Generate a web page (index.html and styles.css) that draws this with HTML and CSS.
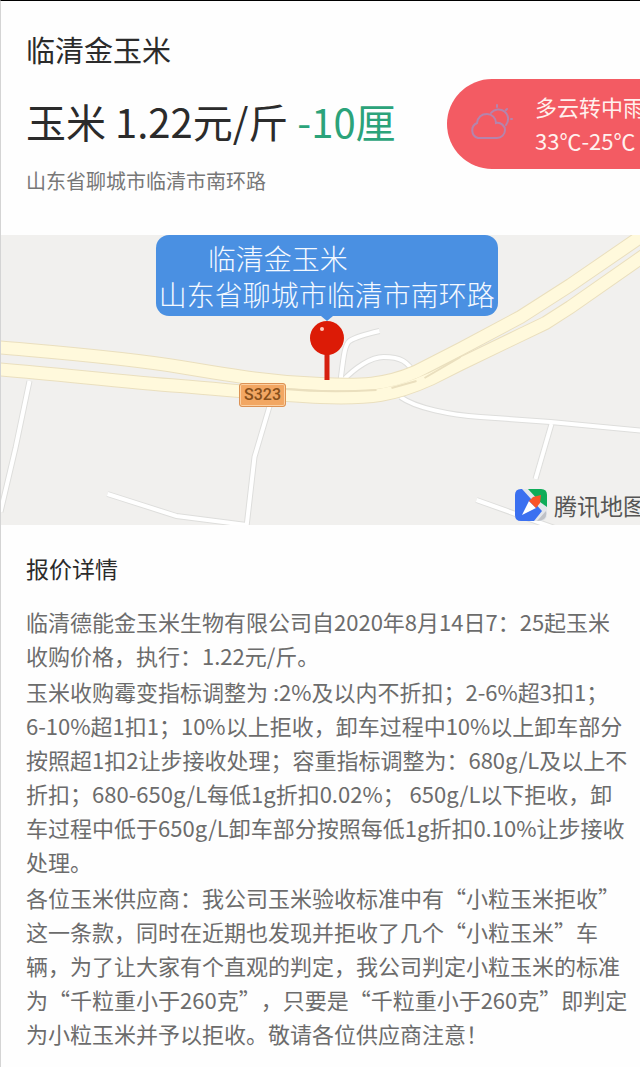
FILE: index.html
```html
<!DOCTYPE html>
<html lang="zh-CN">
  <head>
    <meta charset="UTF-8" />
    <meta name="viewport" content="width=device-width, initial-scale=1.0" />
    <title>临清金玉米</title>
    <link rel="stylesheet" href="styles.css">
  </head>

  <body>
    <header class="summary">
      <h1>临清金玉米</h1>
      <div class="price-row">
        <p class="price">玉米 1.22元/斤 <span class="change">-10厘</span></p>
        <div class="weather">
          <svg class="weather-icon" viewBox="0 0 46 38" width="46" height="38">
            <path d="M9 34 A8 8 0 0 1 8 19 C9 13 13 10 18 10 C23 10 27 14 27 19 C32 18 36 22 36 26 A8 8 0 0 1 28 34 Z" />
            <path d="M22 9 A9 9 0 1 1 37 21 M28 1 V3 M38 5 L37 6 M42 15 H43" />
          </svg>
          <div class="weather-text">
            <span>多云转中雨</span>
            <span>33℃-25℃</span>
          </div>
        </div>
      </div>
      <p class="address">山东省聊城市临清市南环路</p>
    </header>

    <section class="map">
      <svg class="roads" viewBox="0 0 640 290" preserveAspectRatio="xMidYMid slice">
        <defs>
          <path id="upper" d="M-5 112 C50 117 120 122 180 132 C240 142 270 147 320 149 C360 151 385 150 415 137 L460 114 L520 82 L570 50 L650 -5" />
          <path id="lower" d="M-5 134 C60 139 120 147 180 151 C230 155 270 160 320 162 C370 164 395 160 430 144 L460 129 L520 100 L545 88 L570 72 L650 16" />
          <g id="lanes">
            <path d="M29 146 L15 213 L0 277" />
            <path d="M270 168 L254 222 L246 292" />
            <path d="M107 259 L176 281 L246 290" />
            <path d="M340 146 C343 122 344 110 349 106 C355 102 366 99 379 96" />
            <path d="M341 147 C355 132 371 122 383 122 C400 122 407 126 415 140" />
            <path d="M400 162 C415 173 450 180 480 182 L550 187 L645 196" />
            <path d="M551 189 L535 244" />
            <path d="M476 265 L557 294" />
          </g>
        </defs>
        <use href="#lanes" class="lane-edge" />
        <use href="#lanes" class="lane" />
        <use href="#upper" class="main-edge" />
        <use href="#lower" class="main-edge" />
        <use href="#upper" class="main-road" />
        <use href="#lower" class="main-road" />
        <path class="divider" d="M284 154 C315 157 345 157 376 155 M391 153 L416 146 M424 143 L460 122" />
      </svg>

      <span class="sign">S323</span>

      <div class="marker">
        <div class="callout">
          <span class="callout-name">临清金玉米</span>
          <span>山东省聊城市临清市南环路</span>
        </div>
        <svg class="pin" viewBox="0 0 36 64" width="36" height="64">
          <path fill="#4a90e2" d="M12 0 H24 L18 5 Z" />
          <path stroke="#d5200f" stroke-width="5" d="M18 36 V64" />
          <circle cx="18" cy="22" r="17" fill="#dc1b06" />
          <circle cx="13" cy="13" r="2" fill="#ffc9bd" />
        </svg>
      </div>

      <div class="map-brand">
        <svg viewBox="0 0 32 32" width="32" height="32">
          <rect width="32" height="32" rx="6" fill="#e3e6eb" />
          <path fill="#3b70f0" d="M6 0 H7 L27 22 L19 32 H6 Q0 32 0 26 V6 Q0 0 6 0 Z" />
          <path fill="#10ac59" d="M13 0 H26 Q32 0 32 6 V18 L25 13 Z" />
          <path fill="#bfc2c7" d="M31 22 Q33 32 22 32 Z" />
          <path fill="#fff" d="M7 26 L14 12 L21 19 Z" />
          <path fill="#fa5429" d="M14 12 L18 8 L26 6 L25 14 L21 19 Z" />
        </svg>
        <span>腾讯地图</span>
      </div>
    </section>

    <main class="detail">
      <h2>报价详情</h2>
      <p>临清德能金玉米生物有限公司自2020年8月14日7：25起玉米收购价格，执行：1.22元/斤。</p>
      <p>玉米收购霉变指标调整为 :2%及以内不折扣；2-6%超3扣1；6-10%超1扣1；10%以上拒收，卸车过程中10%以上卸车部分按照超1扣2让步接收处理；容重指标调整为：680g/L及以上不折扣；680-650g/L每低1g折扣0.02%； 650g/L以下拒收，卸车过程中低于650g/L卸车部分按照每低1g折扣0.10%让步接收处理。</p>
      <p>各位玉米供应商：我公司玉米验收标准中有“小粒玉米拒收”这一条款，同时在近期也发现并拒收了几个“小粒玉米”车辆，为了让大家有个直观的判定，我公司判定小粒玉米的标准为“千粒重小于260克”，只要是“千粒重小于260克”即判定为小粒玉米并予以拒收。敬请各位供应商注意！</p>
    </main>
  </body>
</html>
```

FILE: styles.css
```css
* {
  box-sizing: border-box;
}

body {
  margin: 0;
  min-height: 100vh;
  border-top: 1px solid #000;
  border-left: 1px solid #d4d4d4;
  background: #fefefe;
  color: #2b2b2b;
  font-family: "Noto Sans CJK SC", sans-serif;
  text-spacing-trim: space-all;
  overflow-x: hidden;
}

h1,
h2,
p {
  margin: 0;
  font-weight: 400;
}

.summary {
  padding: 28px 0 42px 25px;
}

.summary h1 {
  font-size: 29px;
  line-height: 40px;
}

.price-row {
  display: flex;
  align-items: center;
  justify-content: space-between;
  margin-top: 10px;
}

.price {
  padding-bottom: 6px;
  font-size: 40px;
  line-height: 52px;
  white-space: nowrap;
}

.change {
  color: #2ba37a;
}

.weather {
  display: flex;
  align-items: center;
  gap: 20px;
  flex: 0 0 193px;
  height: 90px;
  padding: 0 0 2px 22px;
  border-radius: 45px 0 0 45px;
  background: #f35b63;
  color: #fff1ee;
  font-size: 22px;
  line-height: 34px;
  white-space: nowrap;
  overflow: hidden;
}

.weather-icon {
  flex: none;
  fill: none;
  stroke: #b584ac;
  stroke-width: 2;
  stroke-linecap: round;
}

.weather-text {
  display: flex;
  flex-direction: column;
}

.address {
  color: #777;
  font-size: 20px;
  line-height: 24px;
}

.map {
  position: relative;
  height: 290px;
  background: #f1f0ee;
  overflow: hidden;
}

.roads {
  display: block;
  width: 100%;
  height: 100%;
  fill: none;
}

.lane-edge {
  stroke: #dededc;
  stroke-width: 6;
}

.lane {
  stroke: #fff;
  stroke-width: 4;
}

.main-edge {
  stroke: #eadfbe;
  stroke-width: 14;
}

.main-road {
  stroke: #fff9dc;
  stroke-width: 12;
}

.divider {
  stroke: #eadfbe;
  stroke-width: 2;
}

.sign {
  position: absolute;
  top: 148px;
  left: 238px;
  padding: 0 4px;
  border: 1px solid #dc9254;
  border-radius: 3px;
  background: #f2a763;
  box-shadow: inset 0 0 0 1px #fbd0a2;
  color: #87501b;
  font-family: Roboto, sans-serif;
  font-size: 16px;
  font-weight: 500;
  line-height: 22px;
}

.marker {
  position: absolute;
  top: 0;
  left: 51%;
  transform: translateX(-50%);
  display: flex;
  flex-direction: column;
  align-items: center;
}

.callout {
  display: flex;
  flex-direction: column;
  padding: 5px 3px 4px;
  border-radius: 13px;
  background: #4a90e2;
  color: #f4f9ff;
  font-size: 28px;
  font-weight: 300;
  line-height: 36px;
  white-space: nowrap;
}

.callout-name {
  padding-left: 49px;
}

.map-brand {
  position: absolute;
  right: -6px;
  bottom: 4px;
  display: flex;
  align-items: center;
  gap: 7px;
  color: #555;
  font-size: 23px;
  line-height: 32px;
  white-space: nowrap;
}

.detail {
  padding: 26px 12px 12px 25px;
}

.detail h2 {
  margin-bottom: 19px;
  font-size: 23px;
  line-height: 34px;
}

.detail p {
  margin-bottom: 2px;
  color: #6c6c6c;
  font-size: 22px;
  line-height: 34px;
}
```
